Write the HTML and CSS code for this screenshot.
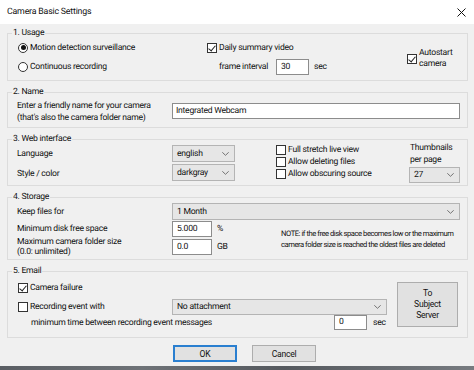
FILE: index.html
```html
<!DOCTYPE html>
<html lang="en">
<head>
    <meta charset="UTF-8">
    <title>Camera Basic Settings</title>
    <link rel="stylesheet" href="styles.css">
</head>
<body>
    <div class="window">
        <div class="titlebar">
            <span class="title">Camera Basic Settings</span>
            <svg class="close" width="9" height="9" viewBox="0 0 9 9">
                <path d="M0.5 0.5 L8.5 8.5 M8.5 0.5 L0.5 8.5" stroke="#111" stroke-width="1" fill="none"/>
            </svg>
        </div>

        <div class="content">
            <!-- 1. Usage -->
            <section class="group usage">
                <div class="group-title">1. Usage</div>
                <div class="usage-grid">
                    <label class="opt"><span class="radio checked"></span>Motion detection surveillance</label>
                    <label class="opt"><span class="check checked"></span>Daily summary video</label>
                    <label class="opt autostart"><span class="check checked"></span><span class="two-line">Autostart<br>camera</span></label>
                    <label class="opt"><span class="radio"></span>Continuous recording</label>
                    <div class="interval">
                        <span>frame interval</span>
                        <span class="field">30</span>
                        <span class="unit">sec</span>
                    </div>
                </div>
            </section>

            <!-- 2. Name -->
            <section class="group name">
                <div class="group-title">2. Name</div>
                <div class="name-row">
                    <div class="hint">Enter a friendly name for your camera<br>(that's also the camera folder name)</div>
                    <span class="field">Integrated Webcam</span>
                </div>
            </section>

            <!-- 3. Web interface -->
            <section class="group web">
                <div class="group-title">3. Web interface</div>
                <div class="web-row">
                    <div class="web-grid">
                        <span class="lbl">Language</span>
                        <span class="combo">english<svg class="chev" width="7" height="4" viewBox="0 0 7 4"><path d="M0.3 0.3 L3.5 3.3 L6.7 0.3" stroke="#666" stroke-width="0.9" fill="none"/></svg></span>
                        <span class="lbl">Style / color</span>
                        <span class="combo">darkgray<svg class="chev" width="7" height="4" viewBox="0 0 7 4"><path d="M0.3 0.3 L3.5 3.3 L6.7 0.3" stroke="#666" stroke-width="0.9" fill="none"/></svg></span>
                    </div>
                    <div class="checks">
                        <label class="opt"><span class="check"></span>Full stretch live view</label>
                        <label class="opt"><span class="check"></span>Allow deleting files</label>
                        <label class="opt"><span class="check"></span>Allow obscuring source</label>
                    </div>
                    <div class="thumbs">
                        <div class="two-line">Thumbnails<br>per page</div>
                        <span class="combo">27<svg class="chev" width="7" height="4" viewBox="0 0 7 4"><path d="M0.3 0.3 L3.5 3.3 L6.7 0.3" stroke="#666" stroke-width="0.9" fill="none"/></svg></span>
                    </div>
                </div>
            </section>

            <!-- 4. Storage -->
            <section class="group storage">
                <div class="group-title">4. Storage</div>
                <div class="storage-grid">
                    <span class="lbl">Keep files for</span>
                    <span class="combo keep">1 Month<svg class="chev" width="7" height="4" viewBox="0 0 7 4"><path d="M0.3 0.3 L3.5 3.3 L6.7 0.3" stroke="#666" stroke-width="0.9" fill="none"/></svg></span>
                    <span class="lbl">Minimum disk free space</span>
                    <span class="field">5.000</span>
                    <span class="unit">%</span>
                    <p class="note">NOTE: if the free disk space becomes low or the maximum<br>camera folder size is reached the oldest files are deleted</p>
                    <span class="lbl small-lines">Maximum camera folder size<br>(0.0: unlimited)</span>
                    <span class="field">0.0</span>
                    <span class="unit">GB</span>
                </div>
            </section>

            <!-- 5. Email -->
            <section class="group email">
                <div class="group-title">5. Email</div>
                <div class="email-row">
                    <div class="email-grid">
                        <label class="opt span-all"><span class="check checked"></span>Camera failure</label>
                        <label class="opt"><span class="check"></span>Recording event with</label>
                        <span class="combo">No attachment<svg class="chev" width="7" height="4" viewBox="0 0 7 4"><path d="M0.3 0.3 L3.5 3.3 L6.7 0.3" stroke="#666" stroke-width="0.9" fill="none"/></svg></span>
                        <div class="min-time span-all">
                            <span>minimum time between recording event messages</span>
                            <span class="field">0</span>
                            <span class="unit">sec</span>
                        </div>
                    </div>
                    <button class="btn subject">To<br>Subject<br>Server</button>
                </div>
            </section>

            <div class="actions">
                <button class="btn default">OK</button>
                <button class="btn">Cancel</button>
            </div>
        </div>
    </div>
    <div class="desktop"></div>
</body>
</html>
```

FILE: styles.css
```css
* {
    margin: 0;
    padding: 0;
    box-sizing: border-box;
}

body {
    font-family: Roboto, 'Noto Sans', sans-serif;
    font-size: 8.6px;
    letter-spacing: -0.26px;
    line-height: 12px;
    color: #111111;
    background: #f0f0f0;
    width: 474px;
    height: 370px;
    overflow: hidden;
    text-rendering: geometricPrecision;
}

.window {
    height: 366px;
    background: #f0f0f0;
}

.titlebar {
    height: 24px;
    background: #ffffff;
    display: flex;
    align-items: center;
    justify-content: space-between;
    padding: 0 8px 0 7px;
}

.title {
    font-size: 8.8px;
    letter-spacing: -0.2px;
}

.close {
    display: block;
}

.content {
    padding: 9px 6px 0 7px;
}

/* group boxes */
.group {
    border: 1px solid #dcdcdc;
    margin-bottom: 11px;
}

.group-title {
    width: fit-content;
    margin: -7px 0 0 4px;
    padding: 0 1px;
    background: #f0f0f0;
    line-height: 12px;
}

.usage { height: 48px; }
.name { height: 36px; }
.web { height: 47px; }
.storage { height: 63px; }
.email { height: 67px; margin-bottom: 7px; }

/* controls */
.opt {
    display: flex;
    align-items: center;
    white-space: nowrap;
}

.radio {
    width: 10px;
    height: 10px;
    border: 1px solid #333333;
    border-radius: 50%;
    background: #ffffff;
    margin-right: 2px;
    display: flex;
    align-items: center;
    justify-content: center;
    flex-shrink: 0;
}

.radio.checked::after {
    content: '';
    width: 5px;
    height: 5px;
    border-radius: 50%;
    background: #111111;
}

.check {
    width: 10px;
    height: 10px;
    border: 1px solid #333333;
    background: #ffffff;
    margin-right: 2px;
    flex-shrink: 0;
    position: relative;
}

.check.checked::after {
    content: '';
    position: absolute;
    left: 2px;
    top: 0px;
    width: 3px;
    height: 6px;
    border: solid #222222;
    border-width: 0 1px 1px 0;
    transform: rotate(40deg);
}

.field {
    display: block;
    height: 16px;
    border: 1px solid #8c8c8c;
    background: #ffffff;
    padding-left: 4px;
    line-height: 14px;
    white-space: nowrap;
}

.combo {
    display: flex;
    align-items: center;
    justify-content: space-between;
    height: 17px;
    border: 1px solid #b4b4b4;
    background: #e6e6e6;
    padding: 0 5px 0 4px;
    white-space: nowrap;
}

.chev {
    display: block;
}

.unit {
    padding-left: 5px;
}

.two-line {
    line-height: 11px;
}

/* 1. usage */
.usage-grid {
    display: grid;
    grid-template-columns: 189px 200px 1fr;
    grid-template-rows: 17px 21px;
    align-items: center;
    padding-left: 10px;
}

.autostart {
    grid-column: 3;
    grid-row: 1 / 3;
    align-self: center;
    margin-top: 1px;
}

.interval {
    display: grid;
    grid-template-columns: 57px 33px auto;
    align-items: center;
    padding-left: 12px;
}

/* 2. name */
.name-row {
    display: grid;
    grid-template-columns: 155px 288px;
    padding-left: 9px;
}

.hint {
    margin-top: 2px;
}

.name-row .field {
    margin-top: 5px;
    padding-left: 3px;
}

/* 3. web interface */
.web-row {
    display: flex;
    align-items: flex-start;
    padding-left: 9px;
}

.web-grid {
    display: grid;
    grid-template-columns: 155px 63px;
    grid-template-rows: 17px 17px;
    row-gap: 2px;
    align-items: center;
}

.web-grid .lbl:nth-of-type(3) {
    padding-top: 2px;
}

.checks {
    width: 133px;
    margin: -1px 0 0 41px;
    display: flex;
    flex-direction: column;
}

.checks .opt {
    height: 12px;
}

.thumbs {
    width: 51px;
    margin-top: -3px;
}

.thumbs .two-line {
    line-height: 12px;
    padding-left: 1px;
}

.thumbs .combo {
    height: 16px;
    margin-top: 1px;
}

/* 4. storage */
.storage-grid {
    display: grid;
    grid-template-columns: 155px 40px 69px 179px;
    grid-template-rows: 17px 17px 20px;
    align-items: center;
    padding-left: 9px;
}

.keep {
    grid-column: 2 / 5;
}

.storage-grid .field {
    height: 16px;
}

.note {
    grid-column: 4;
    grid-row: 2 / 4;
    align-self: start;
    margin-top: 8px;
    font-size: 7.6px;
    letter-spacing: -0.45px;
    line-height: 11px;
    white-space: nowrap;
}

.small-lines {
    line-height: 10px;
}

/* 5. email */
.email-row {
    display: flex;
    align-items: flex-start;
    padding-left: 10px;
}

.email-grid {
    display: grid;
    grid-template-columns: 154px 215px;
    margin-top: 4px;
}

.email-grid .span-all {
    grid-column: 1 / 3;
}

.email-grid .opt:first-child {
    height: 14px;
}

.email-grid .opt:nth-child(2) {
    margin-top: 4px;
    height: 16px;
}

.email-grid .combo {
    height: 16px;
    margin-top: 4px;
}

.min-time {
    display: flex;
    align-items: center;
    height: 15px;
    padding-left: 13px;
}

.min-time .field {
    width: 33px;
    height: 15px;
    margin-left: auto;
    line-height: 13px;
}

.min-time .unit {
    width: 20px;
    padding-left: 6px;
}

.btn {
    font: inherit;
    letter-spacing: inherit;
    color: #111111;
    background: #e1e1e1;
    border: 1px solid #adadad;
    line-height: 12px;
}

.subject {
    width: 61px;
    height: 45px;
    margin: 5px 0 0 10px;
    line-height: 11px;
}

.actions {
    display: flex;
    gap: 15px;
    padding-left: 166px;
}

.actions .btn {
    width: 64px;
    height: 17px;
}

.btn.default {
    border: 2px solid #2a7fd0;
}

.desktop {
    height: 4px;
    background: linear-gradient(90deg, #5a5e63 0%, #6e7277 30%, #55595e 60%, #777b80 100%);
}
```
